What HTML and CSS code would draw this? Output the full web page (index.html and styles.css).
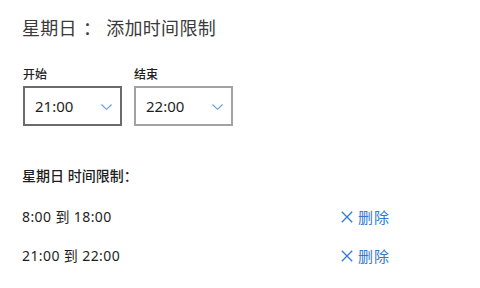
FILE: index.html
```html
<!DOCTYPE html>
<html lang="zh-CN">
<head>
<meta charset="utf-8">
<link rel="stylesheet" href="styles.css">
</head>
<body>
<div class="page">
  <h1 class="title">星期日<span class="colon">：</span> 添加时间限制</h1>
  <div class="pickers">
    <div class="field">
      <div class="label">开始</div>
      <div class="select active">
        <span class="value">21:00</span>
        <svg class="chev" width="11" height="6" viewBox="0 0 11 6"><path d="M0.5 0.5 L5.5 5.3 L10.5 0.5" fill="none" stroke="#6b9bd0" stroke-width="1.1"/></svg>
      </div>
    </div>
    <div class="field">
      <div class="label">结束</div>
      <div class="select">
        <span class="value">22:00</span>
        <svg class="chev" width="11" height="6" viewBox="0 0 11 6"><path d="M0.5 0.5 L5.5 5.3 L10.5 0.5" fill="none" stroke="#6b9bd0" stroke-width="1.1"/></svg>
      </div>
    </div>
  </div>
  <div class="subtitle">星期日 时间限制：</div>
  <div class="row">
    <span class="range">8:00 到 18:00</span>
    <span class="del"><svg class="x" width="12" height="12" viewBox="0 0 12 12"><path d="M0.8 0.8 L11.2 11.2 M11.2 0.8 L0.8 11.2" stroke="#2f7ad3" stroke-width="1.3" fill="none"/></svg>删除</span>
  </div>
  <div class="row">
    <span class="range">21:00 到 22:00</span>
    <span class="del"><svg class="x" width="12" height="12" viewBox="0 0 12 12"><path d="M0.8 0.8 L11.2 11.2 M11.2 0.8 L0.8 11.2" stroke="#2f7ad3" stroke-width="1.3" fill="none"/></svg>删除</span>
  </div>
</div>
</body>
</html>
```
FILE: styles.css
```css
html, body {
  margin: 0;
  padding: 0;
  background: #ffffff;
}
body {
  font-family: "Noto Sans", "Noto Sans CJK SC", sans-serif;
  color: #1e1e1e;
}
.page {
  padding: 15px 0 0 22px;
}
.title {
  margin: 0;
  font-size: 18px;
  font-weight: 400;
  line-height: 26px;
  color: #3a3a3a;
  letter-spacing: 0.3px;
}
.colon {
  display: inline-block;
  padding-left: 6px;
}
.pickers {
  display: flex;
  gap: 11px;
  margin-top: 25px;
}
.field {
  display: flex;
  flex-direction: column;
}
.label {
  font-size: 12px;
  line-height: 14px;
  font-weight: 500;
  margin-left: 1px;
  margin-top: 2px;
  margin-bottom: 4px;
}
.select {
  box-sizing: border-box;
  width: 99px;
  height: 40px;
  border: 2px solid #a3a3a3;
  display: flex;
  align-items: center;
  justify-content: space-between;
  padding: 0 8px 0 10px;
  margin-left: 1px;
}
.select.active {
  border-color: #6b6b6b;
}
.value {
  font-size: 15px;
  line-height: 20px;
  color: #1e1e1e;
}
.chev {
  display: block;
  margin-top: 2px;
}
.subtitle {
  margin-top: 40px;
  font-size: 14px;
  line-height: 20px;
  font-weight: 500;
}
.row {
  display: flex;
  align-items: center;
  margin-top: 21px;
  height: 20px;
}
.row + .row {
  margin-top: 19px;
}
.range {
  width: 319px;
  font-size: 14px;
  line-height: 20px;
  letter-spacing: 0.4px;
}
.del {
  color: #2f7ad3;
  font-size: 15px;
  line-height: 20px;
  letter-spacing: 1px;
  display: flex;
  align-items: center;
}
.x {
  display: block;
  margin-right: 5px;
}
```
